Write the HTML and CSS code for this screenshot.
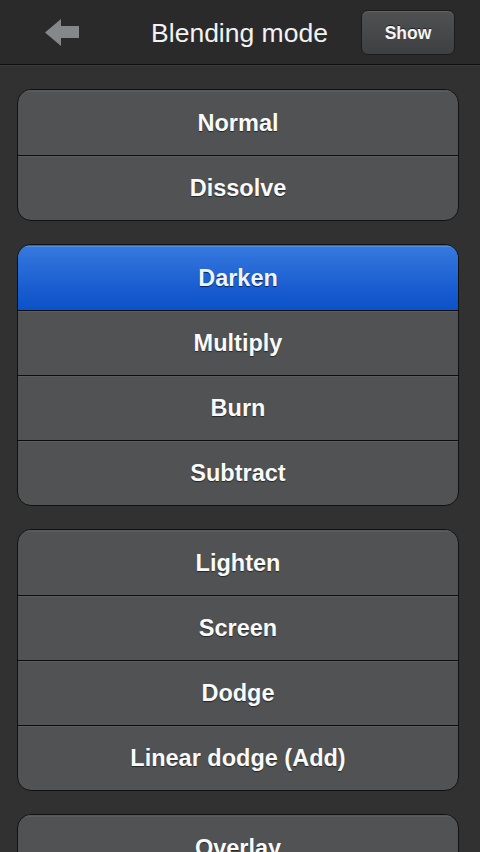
FILE: index.html
```html
<!DOCTYPE html>
<html lang="en">
<head>
  <meta charset="UTF-8" />
  <meta name="viewport" content="width=device-width, initial-scale=1.0"/>
  <title>Blending mode</title>
  <link rel="stylesheet" href="styles.css">
</head>
<body>

  <div class="topbar">
    <button class="back" aria-label="Back">
      <svg width="36" height="28" viewBox="0 0 36 28">
        <polygon points="1,13.5 17,0 17,7 35,7 35,19 17,19 17,27" fill="#85888b"/>
      </svg>
    </button>
    <h1>Blending mode</h1>
    <button class="show">Show</button>
  </div>

  <div class="list">
    <ul class="group">
      <li>Normal</li>
      <li>Dissolve</li>
    </ul>
    <ul class="group">
      <li class="selected">Darken</li>
      <li>Multiply</li>
      <li>Burn</li>
      <li>Subtract</li>
    </ul>
    <ul class="group">
      <li>Lighten</li>
      <li>Screen</li>
      <li>Dodge</li>
      <li>Linear dodge (Add)</li>
    </ul>
    <ul class="group">
      <li>Overlay</li>
    </ul>
  </div>

</body>
</html>
```

FILE: styles.css
```css
body {
  margin: 0;
  font-family: "Liberation Sans", Arial, sans-serif;
  background: #313131;
  overflow: hidden;
  height: 852px;
}

.topbar {
  height: 64px;
  background: #2a2a2a;
  border-bottom: 1px solid #0e0e0e;
  box-shadow: 0 1px 0 #3a3a3a;
  display: flex;
  align-items: center;
}

.back {
  background: none;
  border: none;
  padding: 0;
  margin-left: 44px;
  margin-top: 2px;
  width: 36px;
  height: 28px;
}

.topbar h1 {
  flex: 1;
  margin: 0;
  text-align: center;
  color: #f2f2f2;
  font-size: 26.5px;
  font-weight: normal;
  padding-left: 38px;
  padding-top: 3px;
}

.show {
  width: 94px;
  height: 45px;
  margin-right: 25px;
  margin-top: 1px;
  background: linear-gradient(#505153, #3e3f41);
  border: 1px solid #1c1c1c;
  border-radius: 7px;
  box-shadow: inset 0 1px 0 #626365;
  color: #f4f4f4;
  font-family: "Liberation Sans", Arial, sans-serif;
  font-weight: bold;
  font-size: 17.5px;
  text-shadow: 0 -1px 0 rgba(0,0,0,0.6);
  padding: 2px 0 0 0;
}

.list {
  padding: 24px 21px 0 17px;
}

.group {
  list-style: none;
  margin: 0 0 23px 0;
  padding: 0;
  border: 1px solid #111;
  border-radius: 14px;
  overflow: hidden;
  background: #505254;
}

.group li {
  height: 64px;
  display: flex;
  align-items: center;
  justify-content: center;
  color: #fafafa;
  font-weight: bold;
  font-size: 23.5px;
  text-shadow: 0 1px 1px rgba(0,0,0,0.55);
  border-top: 1px solid #555759;
  box-shadow: inset 0 1px 0 #5a5c5e;
}

.group li + li {
  border-top: 1px solid #0d0d0d;
}

.group li.selected {
  background: linear-gradient(#3779de, #1b5fd2 60%, #0b51c8);
  color: #eef4ff;
  box-shadow: inset 0 1px 0 #4f8ae4;
  border-top-color: #2a68d8;
  text-shadow: 0 1px 1px rgba(0,20,60,0.8);
}
```
